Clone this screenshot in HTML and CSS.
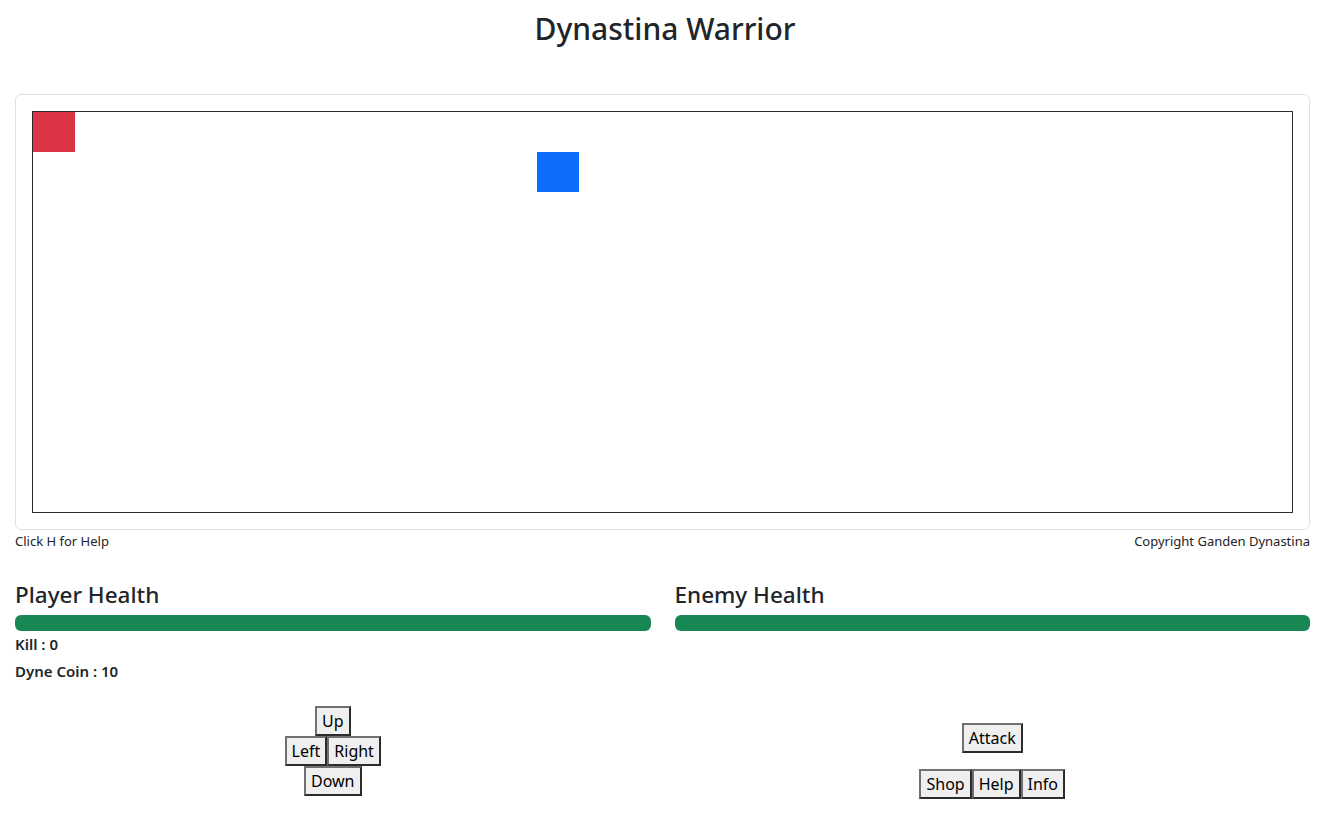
FILE: index.html
```html
<!DOCTYPE html>
<html lang="en">
<head>
<meta charset="utf-8">
<title>Dynastina Warrior</title>
<link rel="stylesheet" href="styles.css">
</head>
<body>
<h1 class="title">Dynastina Warrior</h1>
<main class="container">
  <div class="card">
    <div class="board">
      <div class="tile tile-player"></div>
      <div class="tile tile-enemy"></div>
    </div>
  </div>
  <div class="card-footer">
    <span>Click H for Help</span>
    <span>Copyright Ganden Dynastina</span>
  </div>
  <div class="stats">
    <section class="col">
      <h4 class="col-title">Player Health</h4>
      <div class="progress"><div class="progress-bar" style="width:100%"></div></div>
      <p class="stat">Kill : 0</p>
      <p class="stat">Dyne Coin : 10</p>
      <div class="dpad">
        <div class="btn-row"><button class="btn">Up</button></div>
        <div class="btn-row"><button class="btn">Left</button><button class="btn">Right</button></div>
        <div class="btn-row"><button class="btn">Down</button></div>
      </div>
    </section>
    <section class="col">
      <h4 class="col-title">Enemy Health</h4>
      <div class="progress"><div class="progress-bar" style="width:100%"></div></div>
      <div class="actions">
        <div class="btn-row"><button class="btn">Attack</button></div>
        <div class="btn-row btn-row-menu"><button class="btn">Shop</button><button class="btn">Help</button><button class="btn">Info</button></div>
      </div>
    </section>
  </div>
</main>
</body>
</html>
```

FILE: styles.css
```css
* { box-sizing: border-box; }
body {
  margin: 0;
  font-family: "Noto Sans", "Open Sans", sans-serif;
  color: #212529;
  background: #fff;
}
.title {
  margin: 0;
  padding-top: 10px;
  text-align: center;
  font-size: 30px;
  font-weight: 500;
  line-height: 38px;
}
.container {
  padding: 46px 20px 0 15px;
}
.card {
  border: 1px solid #dfe2e5;
  border-radius: 6px;
  padding: 16px;
}
.board {
  position: relative;
  width: 100%;
  height: 402px;
  border: 1px solid #2b2b2b;
}
.tile {
  position: absolute;
  width: 42px;
  height: 40px;
}
.tile-player { left: 0; top: 0; background: #dc3545; }
.tile-enemy { left: 504px; top: 40px; background: #0d6efd; }
.card-footer {
  display: flex;
  justify-content: space-between;
  font-size: 13px;
  line-height: 20px;
  margin-top: 1px;
}
.stats {
  display: grid;
  grid-template-columns: 1fr 1fr;
  column-gap: 24px;
  margin-top: 29px;
}
.col-title {
  margin: 0 0 6px;
  font-size: 22.5px;
  font-weight: 500;
  line-height: 29px;
}
.progress {
  height: 16px;
  background: #e9ecef;
  border-radius: 6px;
  overflow: hidden;
}
.progress-bar { height: 100%; background: #198754; }
.stat {
  margin: 0;
  font-size: 15px;
  font-weight: 600;
  line-height: 27px;
}
.dpad { margin-top: 21px; }
.actions { margin-top: 92px; }
.btn-row { display: flex; justify-content: center; }
.btn-row-menu { margin-top: 16px; }
.btn {
  height: 30px;
  padding: 0 5px;
  font-family: inherit;
  font-size: 16px;
  color: #000;
  background: #efefef;
  border: 2px solid;
  border-color: #707070 #2c2c2c #2c2c2c #707070;
  border-radius: 0;
}
```
